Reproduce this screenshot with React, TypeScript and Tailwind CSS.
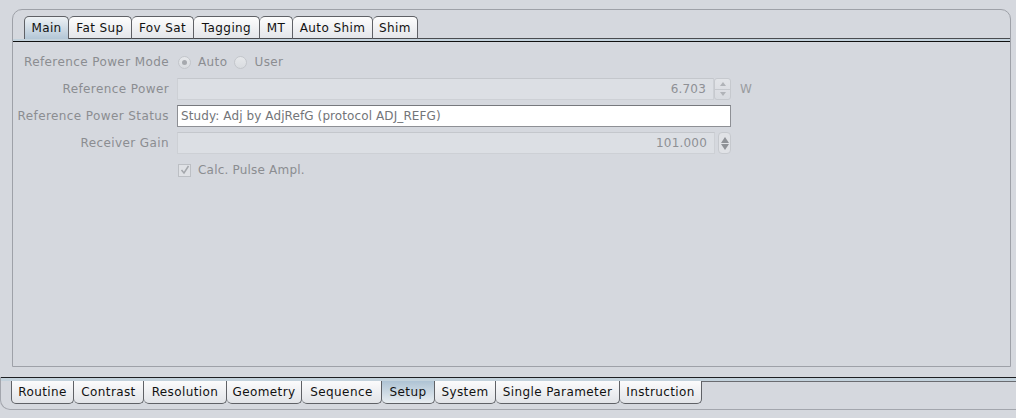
import React from "react";

const topTabs = [
  { label: "Main", w: 44 },
  { label: "Fat Sup", w: 63 },
  { label: "Fov Sat", w: 62 },
  { label: "Tagging", w: 66 },
  { label: "MT", w: 33 },
  { label: "Auto Shim", w: 80 },
  { label: "Shim", w: 45 },
];

const bottomTabs = [
  { label: "Routine", w: 62 },
  { label: "Contrast", w: 70 },
  { label: "Resolution", w: 83 },
  { label: "Geometry", w: 75 },
  { label: "Sequence", w: 80 },
  { label: "Setup", w: 53 },
  { label: "System", w: 61 },
  { label: "Single Parameter", w: 124 },
  { label: "Instruction", w: 82 },
];

function TopTab({ label, w, selected, first }: { label: string; w: number; selected: boolean; first: boolean }) {
  return (
    <div
      style={{ width: w + (first ? 1 : 0) }}
      className={
        "h-[23px] flex items-center justify-center border-t border-r border-[#5f6166] rounded-t-[5px] text-[12px] text-[#111] " +
        (first ? "border-l " : "") +
        (selected
          ? "bg-gradient-to-b from-[#eef2f5] to-[#b3c6d6]"
          : "bg-gradient-to-b from-[#fdfdfd] to-[#e4e6ea] border-b border-b-[#4a4c50]")
      }
    >
      {label}
    </div>
  );
}

function BottomTab({ label, w, selected, first }: { label: string; w: number; selected: boolean; first: boolean }) {
  return (
    <div
      style={{ width: w + (first ? 1 : 0) }}
      className={
        "h-[23px] flex items-center justify-center border-b border-r border-[#5f6166] rounded-b-[5px] text-[12px] text-[#111] " +
        (first ? "border-l " : "") +
        (selected
          ? "bg-gradient-to-b from-[#aec3d4] to-[#e9eef2]"
          : "bg-gradient-to-b from-[#fbfbfc] to-[#e2e4e8]")
      }
    >
      {label}
    </div>
  );
}

function Radio({ checked }: { checked: boolean }) {
  return (
    <span className="w-[13px] h-[13px] rounded-full border border-[#c3c6cb] bg-gradient-to-b from-[#e6e8eb] to-[#d9dce0] flex items-center justify-center">
      {checked && <span className="w-[5px] h-[5px] rounded-full bg-[#a6a9ae]" />}
    </span>
  );
}

export default function App() {
  return (
    <div className="w-[1016px] h-[418px] bg-[#d5d8de] font-['DejaVu_Sans',sans-serif] text-[12px] tracking-[0.4px] overflow-hidden flex flex-col">
      {/* top tabbed pane */}
      <div className="pt-[9px] pl-[12px] pr-[5px]">
        <div className="h-[358px] border border-[#9ea1a8] rounded-t-[10px] flex flex-col">
          <div className="flex items-end pl-[11px] pt-[6px]">
            {topTabs.map((t, i) => (
              <TopTab key={t.label} label={t.label} w={t.w} selected={i === 0} first={i === 0} />
            ))}
            <div className="flex-1 border-b border-[#4a4c50]" />
          </div>
          <div className="h-[2px] bg-[#c3d2dc]" />
          <div className="h-px bg-[#111]" />
          {/* content */}
          <div className="flex-1 pt-[9px] text-[#8b8d91]">
            <div className="grid grid-cols-[156px_554px_auto] gap-x-2 gap-y-[5px] items-center">
              {/* row 1 */}
              <div className="h-[22px] flex items-center justify-end whitespace-nowrap">Reference Power Mode</div>
              <div className="h-[22px] flex items-center gap-[7px] pl-px">
                <Radio checked />
                <span>Auto</span>
                <Radio checked={false} />
                <span>User</span>
              </div>
              <div />
              {/* row 2 */}
              <div className="h-[22px] flex items-center justify-end whitespace-nowrap">Reference Power</div>
              <div className="h-[22px] flex items-stretch">
                <div className="flex-1 border border-[#cdd0d5] border-t-[#c4c7cc] bg-[#dcdfe4] flex items-center justify-end pr-[7px] text-[#8e9095] tracking-[0.2px]">
                  6.703
                </div>
                <div className="w-[17px] border border-[#c6c9ce] rounded-[3px] bg-gradient-to-b from-[#e2e4e8] to-[#d8dbe0] flex flex-col">
                  <div className="flex-1 flex items-center justify-center border-b border-[#c6c9ce]">
                    <svg width="6" height="4" viewBox="0 0 6 4"><path d="M3 0 L6 4 L0 4 Z" fill="#b0b3b8" /></svg>
                  </div>
                  <div className="flex-1 flex items-center justify-center">
                    <svg width="6" height="4" viewBox="0 0 6 4"><path d="M0 0 L6 0 L3 4 Z" fill="#b0b3b8" /></svg>
                  </div>
                </div>
              </div>
              <div className="h-[22px] flex items-center pl-[1px] text-[#9a9ca0]">W</div>
              {/* row 3 */}
              <div className="h-[22px] flex items-center justify-end whitespace-nowrap">Reference Power Status</div>
              <div className="h-[22px] border border-[#8e9095] border-t-[#76787d] bg-white flex items-center pl-[3px] text-[#737579] tracking-[0.1px]">
                Study: Adj by AdjRefG (protocol ADJ_REFG)
              </div>
              <div />
              {/* row 4 */}
              <div className="h-[22px] flex items-center justify-end whitespace-nowrap">Receiver Gain</div>
              <div className="h-[22px] flex items-stretch">
                <div className="flex-1 border border-[#cdd0d5] border-t-[#c4c7cc] bg-[#dcdfe4] flex items-center justify-end pr-[7px] text-[#8e9095] tracking-[0.2px]">
                  101.000
                </div>
                <div className="w-[16px] flex items-center justify-end">
                  <div className="w-[13px] h-[22px] rounded-[4px] border border-[#c6c9ce] bg-[#e0e2e6] flex flex-col items-center justify-center gap-[1px]">
                    <svg width="8" height="6" viewBox="0 0 8 6"><path d="M4 0 L8 6 L0 6 Z" fill="#8f9297" /></svg>
                    <svg width="8" height="6" viewBox="0 0 8 6"><path d="M0 0 L8 0 L4 6 Z" fill="#8f9297" /></svg>
                  </div>
                </div>
              </div>
              <div />
              {/* row 5 */}
              <div />
              <div className="h-[22px] flex items-center gap-[7px] pl-px">
                <span className="w-[13px] h-[13px] border border-[#bcbfc4] bg-[#dfe1e5] flex items-center justify-center">
                  <svg width="10" height="10" viewBox="0 0 10 10">
                    <path d="M1.5 5 L4 8 L8.5 1" stroke="#a4a7ac" strokeWidth="1.5" fill="none" />
                  </svg>
                </span>
                <span className="tracking-[0.2px]">Calc. Pulse Ampl.</span>
              </div>
              <div />
            </div>
          </div>
        </div>
      </div>
      {/* bottom tabbed pane */}
      <div className="mt-[10px] h-[33px] border-l border-b border-[#a3a6ad] rounded-bl-[10px] flex flex-col">
        <div className="h-px bg-[#1e1f22]" />
        <div className="h-[3px] bg-[#c3d2dc]" />
        <div className="flex items-start pl-[10px]">
          {bottomTabs.map((t, i) => (
            <BottomTab key={t.label} label={t.label} w={t.w} selected={i === 5} first={i === 0} />
          ))}
          <div className="flex-1 border-t border-[#6a6c71]" />
        </div>
      </div>
    </div>
  );
}
